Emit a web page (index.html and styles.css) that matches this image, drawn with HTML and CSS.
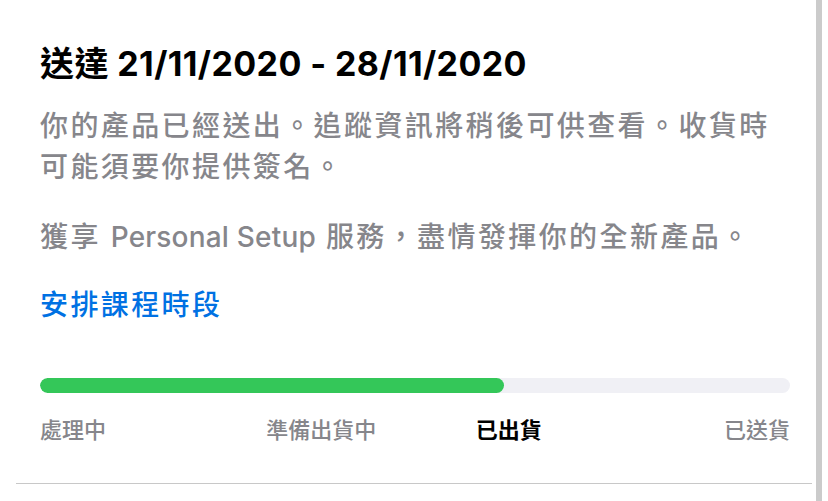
FILE: index.html
```html
<!DOCTYPE html>
<html lang="zh-Hant">
<head>
<meta charset="utf-8">
<title>送達</title>
<link rel="stylesheet" href="styles.css">
</head>
<body>
<div class="screen">
  <div class="panel">
    <section class="card">
      <h1 class="title">送達 21/11/2020 - 28/11/2020</h1>
      <p class="text text-first">你的產品已經送出。追蹤資訊將稍後可供查看。收貨時可能須要你提供簽名。</p>
      <p class="text text-second">獲享 <span class="latin">Personal Setup</span> 服務，盡情發揮你的全新產品。</p>
      <a class="link" href="#">安排課程時段</a>
      <div class="progress"><div class="progress-fill" style="width: 61.8%"></div></div>
      <ol class="steps">
        <li class="step step-first">處理中</li>
        <li class="step">準備出貨中</li>
        <li class="step step-active">已出貨</li>
        <li class="step step-last">已送貨</li>
      </ol>
    </section>
    <div class="divider"></div>
  </div>
  <div class="scrollbar"></div>
</div>
</body>
</html>
```

FILE: styles.css
```css
html, body {
  margin: 0;
  padding: 0;
  background: #ffffff;
}

body {
  font-family: "Inter", "Noto Sans CJK TC", sans-serif;
  color: #1d1d1f;
}

.screen {
  display: flex;
  height: 501px;
  overflow: hidden;
}

.panel {
  width: 816px;
  flex: none;
}

.scrollbar {
  width: 6px;
  flex: none;
  background: #cbcbcb;
}

.card {
  padding: 44px 26px 0 40px;
}

.title {
  margin: 0;
  font-size: 34px;
  line-height: 40px;
  font-weight: 700;
  letter-spacing: 0.4px;
  color: #000000;
}

.text {
  margin: 0;
  font-size: 28px;
  line-height: 41px;
  font-weight: 500;
  color: #86868b;
  letter-spacing: 2.4px;
}

.latin {
  letter-spacing: 0.2px;
}

.text-first {
  margin-top: 22px;
}

.text-second {
  margin-top: 29px;
}

.link {
  display: block;
  margin-top: 27px;
  font-size: 28px;
  line-height: 41px;
  font-weight: 500;
  letter-spacing: 2.4px;
  color: #0071e3;
  text-decoration: none;
}

.progress {
  margin-top: 52px;
  height: 15px;
  border-radius: 8px;
  background: #f0f0f5;
  overflow: hidden;
}

.progress-fill {
  height: 100%;
  border-radius: 8px;
  background: #34c759;
}

.steps {
  list-style: none;
  margin: 22px 0 0;
  padding: 0;
  display: grid;
  grid-template-columns: repeat(4, 1fr);
  font-size: 22px;
  line-height: 30px;
  font-weight: 500;
  color: #86868b;
}

.step {
  justify-self: center;
}

.step-first {
  justify-self: start;
}

.step-last {
  justify-self: end;
}

.step-active {
  color: #000000;
  font-weight: 700;
}

.divider {
  margin: 38px 4px 0 16px;
  height: 1px;
  background: #c8c8c8;
}
```
